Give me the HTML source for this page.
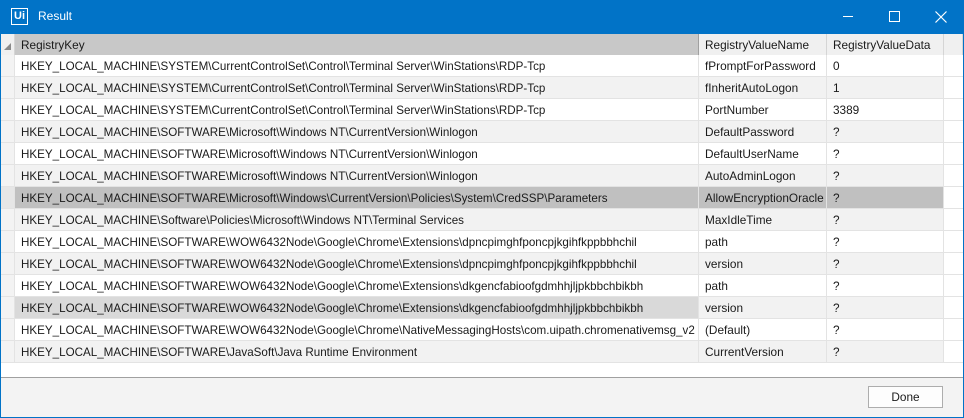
<!DOCTYPE html><html><head><style>
*{margin:0;padding:0;box-sizing:border-box}
body{width:964px;height:418px;background:#0173c7;font-family:"Liberation Sans",sans-serif;font-size:11.8px;color:#1a1a1a;overflow:hidden;position:relative}
.tb{position:absolute;left:0;top:0;width:964px;height:34px;background:#0173c7;color:#fff}
.win{position:absolute;left:1px;top:34px;width:962px;height:383px;background:#f3f3f3}
.grid{position:absolute;left:0;top:0;width:962px;height:344px;background:#fff;border-bottom:1px solid #a0a0a0}
.r{position:absolute;left:0;width:962px;height:22px;border-bottom:1px solid #e3e3e3}
.c{position:absolute;top:0;height:21px;line-height:21px;padding-top:1px;padding-left:6px;border-right:1px solid #e3e3e3;white-space:nowrap;overflow:hidden}
.k{font-stretch:95%}
.k span{display:inline-block;transform:scaleX(0.985);transform-origin:left}
.h .c{background:#f0f0f0;border-right:1px solid #d5d5d5}
</style></head><body>
<div class="tb">
<div style="position:absolute;left:11px;top:8px;width:17px;height:17px;border:1.5px solid #fff;font-size:11px;font-weight:bold;line-height:14px;text-align:center">Ui</div>
<div style="position:absolute;left:38px;top:9px;font-size:12px">Result</div>
<div style="position:absolute;left:843px;top:16px;width:10px;height:1px;background:#fff"></div>
<div style="position:absolute;left:889px;top:11px;width:11px;height:11px;border:1px solid #fff"></div>
<svg style="position:absolute;left:935px;top:11px" width="12" height="12"><path d="M0.5 0.5L11.5 11.5M11.5 0.5L0.5 11.5" stroke="#fff" stroke-width="1.2"/></svg>
</div>
<div class="win"><div class="grid" id="g"></div>
<div style="position:absolute;left:867px;top:352px;width:75px;height:22px;border:1px solid #adadad;background:#fdfdfd;text-align:center;line-height:20px">Done</div>
</div>
<script>
var rows=[
["HKEY_LOCAL_MACHINE\\SYSTEM\\CurrentControlSet\\Control\\Terminal Server\\WinStations\\RDP-Tcp","fPromptForPassword","0"],
["HKEY_LOCAL_MACHINE\\SYSTEM\\CurrentControlSet\\Control\\Terminal Server\\WinStations\\RDP-Tcp","fInheritAutoLogon","1"],
["HKEY_LOCAL_MACHINE\\SYSTEM\\CurrentControlSet\\Control\\Terminal Server\\WinStations\\RDP-Tcp","PortNumber","3389"],
["HKEY_LOCAL_MACHINE\\SOFTWARE\\Microsoft\\Windows NT\\CurrentVersion\\Winlogon","DefaultPassword","?"],
["HKEY_LOCAL_MACHINE\\SOFTWARE\\Microsoft\\Windows NT\\CurrentVersion\\Winlogon","DefaultUserName","?"],
["HKEY_LOCAL_MACHINE\\SOFTWARE\\Microsoft\\Windows NT\\CurrentVersion\\Winlogon","AutoAdminLogon","?"],
["HKEY_LOCAL_MACHINE\\SOFTWARE\\Microsoft\\Windows\\CurrentVersion\\Policies\\System\\CredSSP\\Parameters","AllowEncryptionOracle","?"],
["HKEY_LOCAL_MACHINE\\Software\\Policies\\Microsoft\\Windows NT\\Terminal Services","MaxIdleTime","?"],
["HKEY_LOCAL_MACHINE\\SOFTWARE\\WOW6432Node\\Google\\Chrome\\Extensions\\dpncpimghfponcpjkgihfkppbbhchil","path","?"],
["HKEY_LOCAL_MACHINE\\SOFTWARE\\WOW6432Node\\Google\\Chrome\\Extensions\\dpncpimghfponcpjkgihfkppbbhchil","version","?"],
["HKEY_LOCAL_MACHINE\\SOFTWARE\\WOW6432Node\\Google\\Chrome\\Extensions\\dkgencfabioofgdmhhjljpkbbchbikbh","path","?"],
["HKEY_LOCAL_MACHINE\\SOFTWARE\\WOW6432Node\\Google\\Chrome\\Extensions\\dkgencfabioofgdmhhjljpkbbchbikbh","version","?"],
["HKEY_LOCAL_MACHINE\\SOFTWARE\\WOW6432Node\\Google\\Chrome\\NativeMessagingHosts\\com.uipath.chromenativemsg_v2","(Default)","?"],
["HKEY_LOCAL_MACHINE\\SOFTWARE\\JavaSoft\\Java Runtime Environment","CurrentVersion","?"]];
var h='<div class="r h" style="top:0"><div class="c" style="left:0;width:14px;background:#f0f0f0"><svg width="8" height="8" style="position:absolute;left:3px;top:9px"><path d="M7 0L7 7L0 7Z" fill="#8a8a8a"/></svg></div><div class="c" style="left:14px;width:684px;background:#c8c8c8;border-right-color:#a0a0a0">RegistryKey</div><div class="c" style="left:698px;width:128px">RegistryValueName</div><div class="c" style="left:826px;width:117px">RegistryValueData</div><div class="c" style="left:943px;width:19px"></div></div>';
rows.forEach(function(r,i){var bg=i%2?'#f2f2f2':'#fff',s=i==6,k=s?'#c0c0c0':(i==11?'#d9d9d9':bg),o=s?'#c0c0c0':bg;
h+='<div class="r" style="top:'+(21+i*22)+'px;background:'+bg+'"><div class="c" style="left:0;width:14px;background:'+(s?'#e6e6e6':'#f3f3f3')+'"></div><div class="c k" style="left:14px;width:684px;background:'+k+'"><span>'+r[0]+'</span></div><div class="c" style="left:698px;width:128px;background:'+o+'">'+r[1]+'</div><div class="c" style="left:826px;width:117px;background:'+o+'">'+r[2]+'</div><div class="c" style="left:943px;width:19px;background:#fff;border:0"></div></div>';});
document.getElementById('g').innerHTML=h;
</script>
</body></html>
